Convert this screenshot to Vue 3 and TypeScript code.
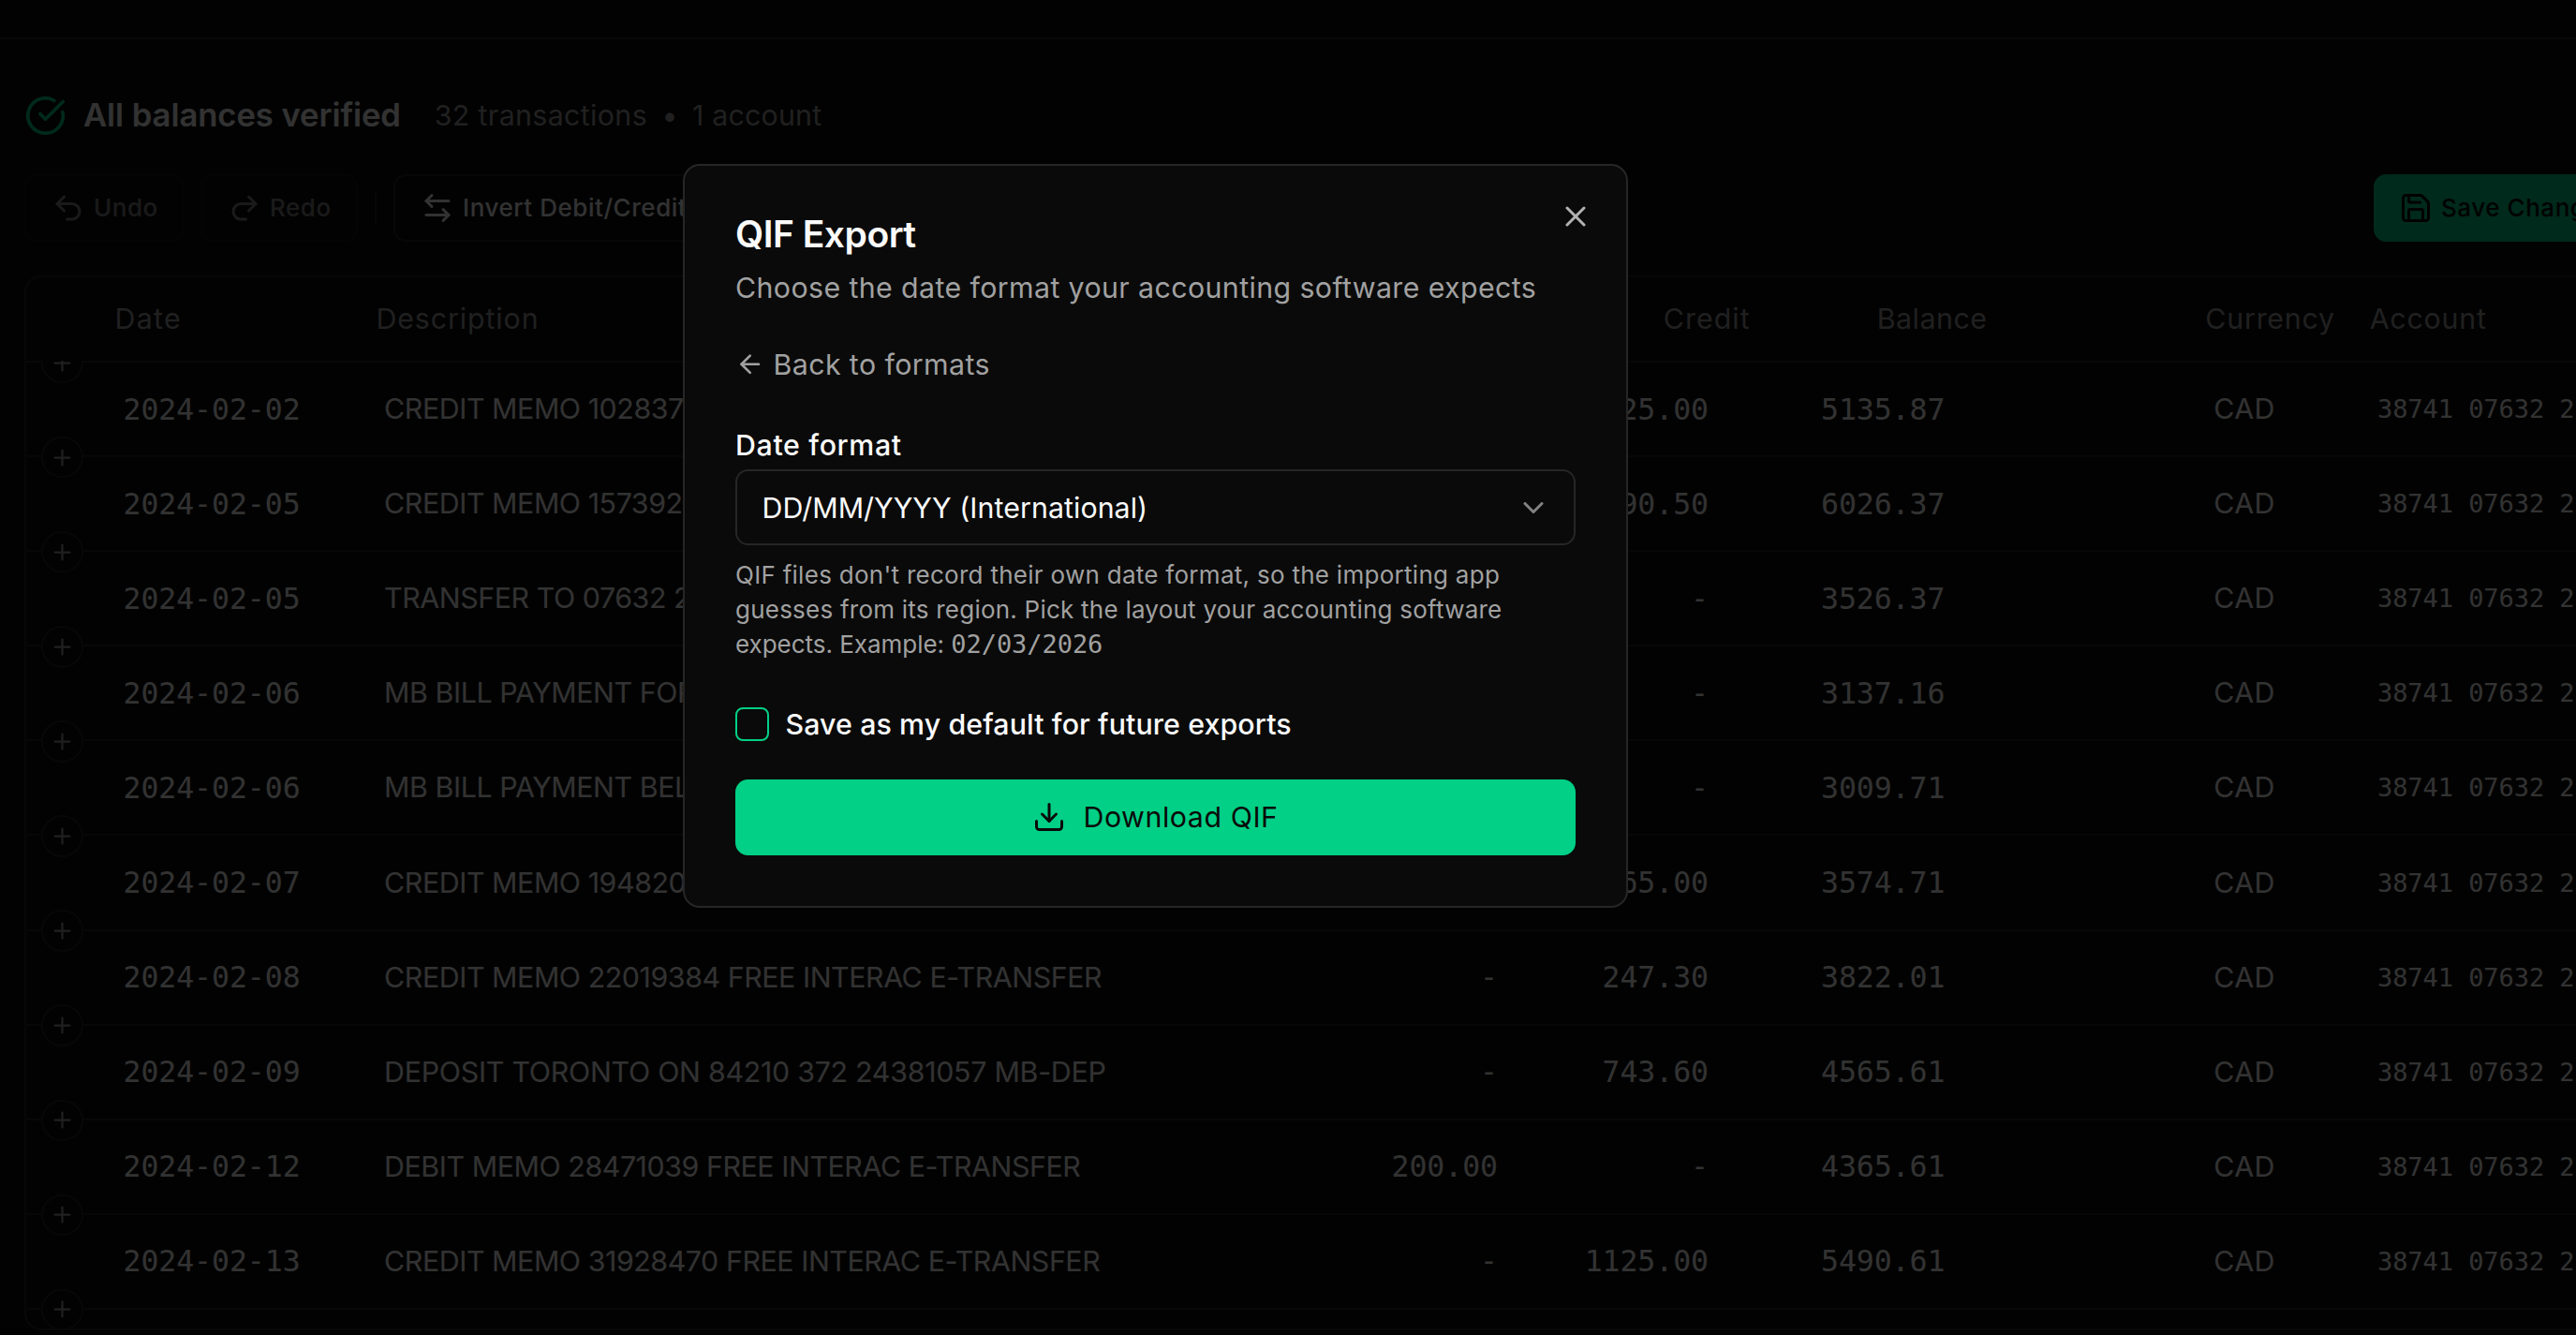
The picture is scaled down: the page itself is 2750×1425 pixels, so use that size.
<script setup lang="ts">
import { ref } from 'vue'

interface Transaction {
  date: string
  description: string
  debit: string
  credit: string
  balance: string
}

const columns = ['Date', 'Description', 'Debit', 'Credit', 'Balance', 'Currency', 'Account']
const currency = 'CAD'
const account = '38741 07632 2'

const transactions: Transaction[] = [
  { date: '2024-02-02', description: 'CREDIT MEMO 10283746', debit: '-', credit: '425.00', balance: '5135.87' },
  { date: '2024-02-05', description: 'CREDIT MEMO 15739204', debit: '-', credit: '890.50', balance: '6026.37' },
  { date: '2024-02-05', description: 'TRANSFER TO 07632 24', debit: '2500.00', credit: '-', balance: '3526.37' },
  { date: '2024-02-06', description: 'MB BILL PAYMENT FORD', debit: '389.21', credit: '-', balance: '3137.16' },
  { date: '2024-02-06', description: 'MB BILL PAYMENT BELL', debit: '127.45', credit: '-', balance: '3009.71' },
  { date: '2024-02-07', description: 'CREDIT MEMO 19482037', debit: '-', credit: '565.00', balance: '3574.71' },
  { date: '2024-02-08', description: 'CREDIT MEMO 22019384 FREE INTERAC E-TRANSFER', debit: '-', credit: '247.30', balance: '3822.01' },
  { date: '2024-02-09', description: 'DEPOSIT TORONTO ON 84210 372 24381057 MB-DEP', debit: '-', credit: '743.60', balance: '4565.61' },
  { date: '2024-02-12', description: 'DEBIT MEMO 28471039 FREE INTERAC E-TRANSFER', debit: '200.00', credit: '-', balance: '4365.61' },
  { date: '2024-02-13', description: 'CREDIT MEMO 31928470 FREE INTERAC E-TRANSFER', debit: '-', credit: '1125.00', balance: '5490.61' },
]

const saveAsDefault = ref(false)
</script>

<template>
  <div class="app">
    <div class="page">
      <header class="topbar"></header>

      <div class="content">
        <div class="status">
          <svg class="icon status-icon" viewBox="0 0 24 24">
            <path d="M21.801 10A10 10 0 1 1 17 3.335" />
            <path d="m9 11 3 3L22 4" />
          </svg>
          <span class="status-title">All balances verified</span>
          <span class="status-meta">32 transactions</span>
          <span class="status-dot">•</span>
          <span class="status-meta status-accounts">1 account</span>
        </div>

        <div class="toolbar">
          <button class="tool disabled undo">
            <svg class="icon" viewBox="0 0 24 24">
              <path d="M9 14 4 9l5-5" />
              <path d="M4 9h10.5a5.5 5.5 0 0 1 5.5 5.5a5.5 5.5 0 0 1-5.5 5.5H11" />
            </svg>
            <span>Undo</span>
          </button>
          <button class="tool disabled redo">
            <svg class="icon" viewBox="0 0 24 24">
              <path d="m15 14 5-5-5-5" />
              <path d="M20 9H9.5A5.5 5.5 0 0 0 4 14.5A5.5 5.5 0 0 0 9.5 20H13" />
            </svg>
            <span>Redo</span>
          </button>
          <i class="divider"></i>
          <button class="tool invert">
            <svg class="icon" viewBox="0 0 24 24">
              <path d="M8 3 4 7l4 4" />
              <path d="M4 7h16" />
              <path d="m16 21 4-4-4-4" />
              <path d="M20 17H4" />
            </svg>
            <span>Invert Debit/Credit</span>
          </button>
          <button class="save">
            <svg class="icon" viewBox="0 0 24 24">
              <path d="M15.2 3a2 2 0 0 1 1.4.6l3.8 3.8a2 2 0 0 1 .6 1.4V19a2 2 0 0 1-2 2H5a2 2 0 0 1-2-2V5a2 2 0 0 1 2-2z" />
              <path d="M17 21v-7a1 1 0 0 0-1-1H8a1 1 0 0 0-1 1v7" />
              <path d="M7 3v4a1 1 0 0 0 1 1h7" />
            </svg>
            <span>Save Changes</span>
          </button>
        </div>

        <section class="table">
          <div class="thead">
            <span v-for="column in columns" :key="column">{{ column }}</span>
          </div>
          <div class="tbody">
            <div v-for="(row, index) in transactions" :key="index" class="row">
              <span class="insert">
                <svg class="icon" viewBox="0 0 24 24"><path d="M5 12h14" /><path d="M12 5v14" /></svg>
              </span>
              <span class="mono">{{ row.date }}</span>
              <span class="text" :class="{ deposit: row.description.startsWith('DEPOSIT') }">{{ row.description }}</span>
              <span class="mono right">{{ row.debit }}</span>
              <span class="mono right">{{ row.credit }}</span>
              <span class="mono balance">{{ row.balance }}</span>
              <span class="text currency">{{ currency }}</span>
              <span class="mono account">{{ account }}</span>
            </div>
            <div class="row last">
              <span class="insert">
                <svg class="icon" viewBox="0 0 24 24"><path d="M5 12h14" /><path d="M12 5v14" /></svg>
              </span>
            </div>
          </div>
        </section>
      </div>
    </div>

    <div class="overlay"></div>

    <div class="dialog" role="dialog">
      <svg class="icon close" viewBox="0 0 24 24"><path d="M18 6 6 18" /><path d="m6 6 12 12" /></svg>
      <h2 class="title">QIF Export</h2>
      <p class="subtitle">Choose the date format your accounting software expects</p>
      <a class="back">
        <svg class="icon" viewBox="0 0 24 24"><path d="m12 19-7-7 7-7" /><path d="M19 12H5" /></svg>
        <span>Back to formats</span>
      </a>
      <label class="label">Date format</label>
      <div class="select">
        <span>DD/MM/YYYY (International)</span>
        <svg class="icon" viewBox="0 0 24 24"><path d="m6 9 6 6 6-6" /></svg>
      </div>
      <p class="help">
        QIF files don't record their own date format, so the importing app<br />
        <span class="middle">guesses from its region. Pick the layout your accounting software</span><br />
        <span class="tight">expects. Example: </span><span class="example">02/03/2026</span>
      </p>
      <div class="check" @click="saveAsDefault = !saveAsDefault">
        <span class="box"></span>
        <span class="check-label">Save as my default for future exports</span>
      </div>
      <button class="download">
        <svg class="icon" viewBox="0 0 24 24">
          <path d="M12 15V3" />
          <path d="M21 15v4a2 2 0 0 1-2 2H5a2 2 0 0 1-2-2v-4" />
          <path d="m7 10 5 5 5-5" />
        </svg>
        <span>Download QIF</span>
      </button>
    </div>
  </div>
</template>

<style>
html,
body {
  margin: 0;
  overflow: hidden;
  background: #020202;
}
</style>

<style scoped>
.app {
  position: relative;
  width: 2750px;
  height: 1425px;
  overflow: hidden;
  background: #0a0a0a;
  color: #fafafa;
  font-family: Inter, "Liberation Sans", sans-serif;
  font-size: 30.33px;
  white-space: nowrap;
}

.icon {
  flex: none;
  display: block;
  width: 36px;
  height: 36px;
  fill: none;
  stroke: currentColor;
  stroke-width: 2;
  stroke-linecap: round;
  stroke-linejoin: round;
}

button {
  box-sizing: border-box;
  margin: 0;
  font-family: inherit;
  color: inherit;
}

.topbar {
  box-sizing: border-box;
  height: 42px;
  border-bottom: 2px solid #262626;
}

.content {
  width: 2772px;
  padding: 59px 0 0 26px;
}

.status {
  display: flex;
  align-items: center;
  height: 45px;
}

.status-icon {
  width: 45px;
  height: 45px;
  color: #01d086;
}

.status-title {
  margin: -3px 0 0 18px;
  width: 374.7px;
  font-size: 34.66px;
  font-weight: 600;
  letter-spacing: -0.09px;
}

.status-meta {
  margin-top: -2px;
  color: #a1a1a1;
  letter-spacing: 0.37px;
}

.status-dot {
  width: 48px;
  margin-top: -2px;
  text-align: center;
  color: #a1a1a1;
}

.status-accounts {
  letter-spacing: 0.2px;
}

.toolbar {
  display: flex;
  align-items: center;
  height: 72px;
  margin-top: 40px;
  font-weight: 500;
}

.tool,
.save {
  display: flex;
  align-items: center;
  gap: 9px;
  height: 72px;
  padding: 0 25px;
  border: 2px solid #262626;
  border-radius: 13.5px;
  background: #0a0a0a;
  font-size: 26px;
  font-weight: 500;
  letter-spacing: 0.55px;
}

.tool span,
.save span {
  margin-top: -1px;
}

.disabled {
  padding-left: 27px;
  opacity: 0.5;
}

.undo {
  width: 170px;
}

.redo {
  width: 168px;
  margin-left: 18px;
}

.divider {
  width: 2px;
  height: 36px;
  margin: 0 18px;
  background: #262626;
}

.invert {
  width: 342px;
  padding-left: 27px;
}

.save {
  width: 264px;
  margin-left: auto;
  border-color: #01d086;
  background: #01d086;
  color: #0a0a0a;
}

.table {
  box-sizing: border-box;
  height: 1126px;
  margin-top: 36px;
  border: 2px solid #262626;
  border-radius: 18px;
  overflow: hidden;
}

.thead {
  display: grid;
  grid-template-columns: 278.9px 1149.2px 225px 228px 350.7px 175.3px 1fr;
  align-items: center;
  box-sizing: border-box;
  height: 89px;
  padding: 0 0 1px 94.6px;
  color: #a1a1a1;
  letter-spacing: 0.78px;
}

.thead span:nth-child(1) {
  letter-spacing: 1.3px;
}

.thead span:nth-child(2) {
  letter-spacing: 0.9px;
}

.thead span:nth-child(4) {
  letter-spacing: 1.07px;
}

.thead span:nth-child(5) {
  letter-spacing: 0.52px;
}

.tbody {
  height: 1033px;
  overflow: hidden;
}

.row {
  position: relative;
  display: grid;
  grid-template-columns: 278.6px 1000.4px 188.5px 225px 539.3px 174.7px 1fr;
  align-items: center;
  box-sizing: border-box;
  height: 101.1px;
  padding-left: 103.5px;
  border-top: 2px solid #262626;
}

.insert {
  position: absolute;
  left: 16px;
  top: -22.25px;
  display: flex;
  align-items: center;
  justify-content: center;
  box-sizing: border-box;
  width: 44.5px;
  height: 44.5px;
  border: 2px solid #262626;
  border-radius: 50%;
  background: #0a0a0a;
  color: #a1a1a1;
}

.insert .icon {
  width: 27px;
  height: 27px;
}

.mono {
  font-family: "DejaVu Sans Mono", "Liberation Mono", monospace;
  font-size: 31.5px;
  letter-spacing: -0.06px;
}

.text {
  margin-top: -1px;
  letter-spacing: -0.43px;
}

.deposit {
  letter-spacing: -0.26px;
}

.right {
  text-align: right;
}

.balance {
  padding-left: 120px;
}

.currency {
  letter-spacing: 0.36px;
}

.account {
  font-size: 27px;
}

.overlay {
  position: absolute;
  inset: 0;
  background: rgba(0, 0, 0, 0.8);
}

.dialog {
  position: absolute;
  left: 729px;
  top: 175px;
  display: flex;
  flex-direction: column;
  box-sizing: border-box;
  width: 1009px;
  height: 794px;
  padding: 54px;
  border: 2px solid #262626;
  border-radius: 18px;
  background: #0a0a0a;
}

.close {
  position: absolute;
  right: 36px;
  top: 36px;
  opacity: 0.7;
}

.title {
  margin: 0;
  height: 38px;
  line-height: 38px;
  font-size: 39px;
  font-weight: 600;
  letter-spacing: -0.49px;
}

.subtitle {
  margin: 15.5px 0 0;
  height: 45px;
  line-height: 45px;
  color: #a1a1a1;
  letter-spacing: 0.39px;
}

.back {
  display: flex;
  align-items: center;
  gap: 9px;
  height: 36px;
  margin-top: 41.5px;
  color: #a1a1a1;
  letter-spacing: 0.4px;
}

.back .icon {
  width: 31.5px;
  height: 31.5px;
}

.back span {
  margin-top: -1px;
}

.label {
  height: 31px;
  line-height: 31px;
  margin-top: 52.5px;
  font-weight: 500;
  letter-spacing: 0.65px;
}

.select {
  display: flex;
  align-items: center;
  justify-content: space-between;
  box-sizing: border-box;
  height: 81px;
  margin-top: 10.5px;
  padding: 0 25px 0 26.5px;
  border: 2px solid #262626;
  border-radius: 13.5px;
  letter-spacing: 0.06px;
}

.select .icon {
  opacity: 0.5;
}

.help {
  margin: 12.7px 0 0;
  height: 111.3px;
  line-height: 37.1px;
  font-size: 26px;
  color: #a1a1a1;
  letter-spacing: 0.28px;
}

.middle {
  letter-spacing: 0.23px;
}

.tight {
  letter-spacing: -0.03px;
}

.example {
  font-family: "DejaVu Sans Mono", "Liberation Mono", monospace;
  font-size: 27px;
  line-height: 1;
  letter-spacing: -0.06px;
}

.check {
  display: flex;
  align-items: center;
  height: 36px;
  margin-top: 49px;
}

.box {
  box-sizing: border-box;
  width: 36px;
  height: 36px;
  border: 2px solid #01d086;
  border-radius: 8px;
}

.check-label {
  margin-left: 17.5px;
  font-weight: 500;
  letter-spacing: 0.11px;
}

.download {
  display: flex;
  align-items: center;
  justify-content: center;
  gap: 18px;
  height: 81px;
  margin-top: 41px;
  padding: 0;
  border: 0;
  border-radius: 13.5px;
  background: #01d086;
  color: #0a0a0a;
  font-size: 30.33px;
  font-weight: 400;
  letter-spacing: 0.55px;
}
</style>
